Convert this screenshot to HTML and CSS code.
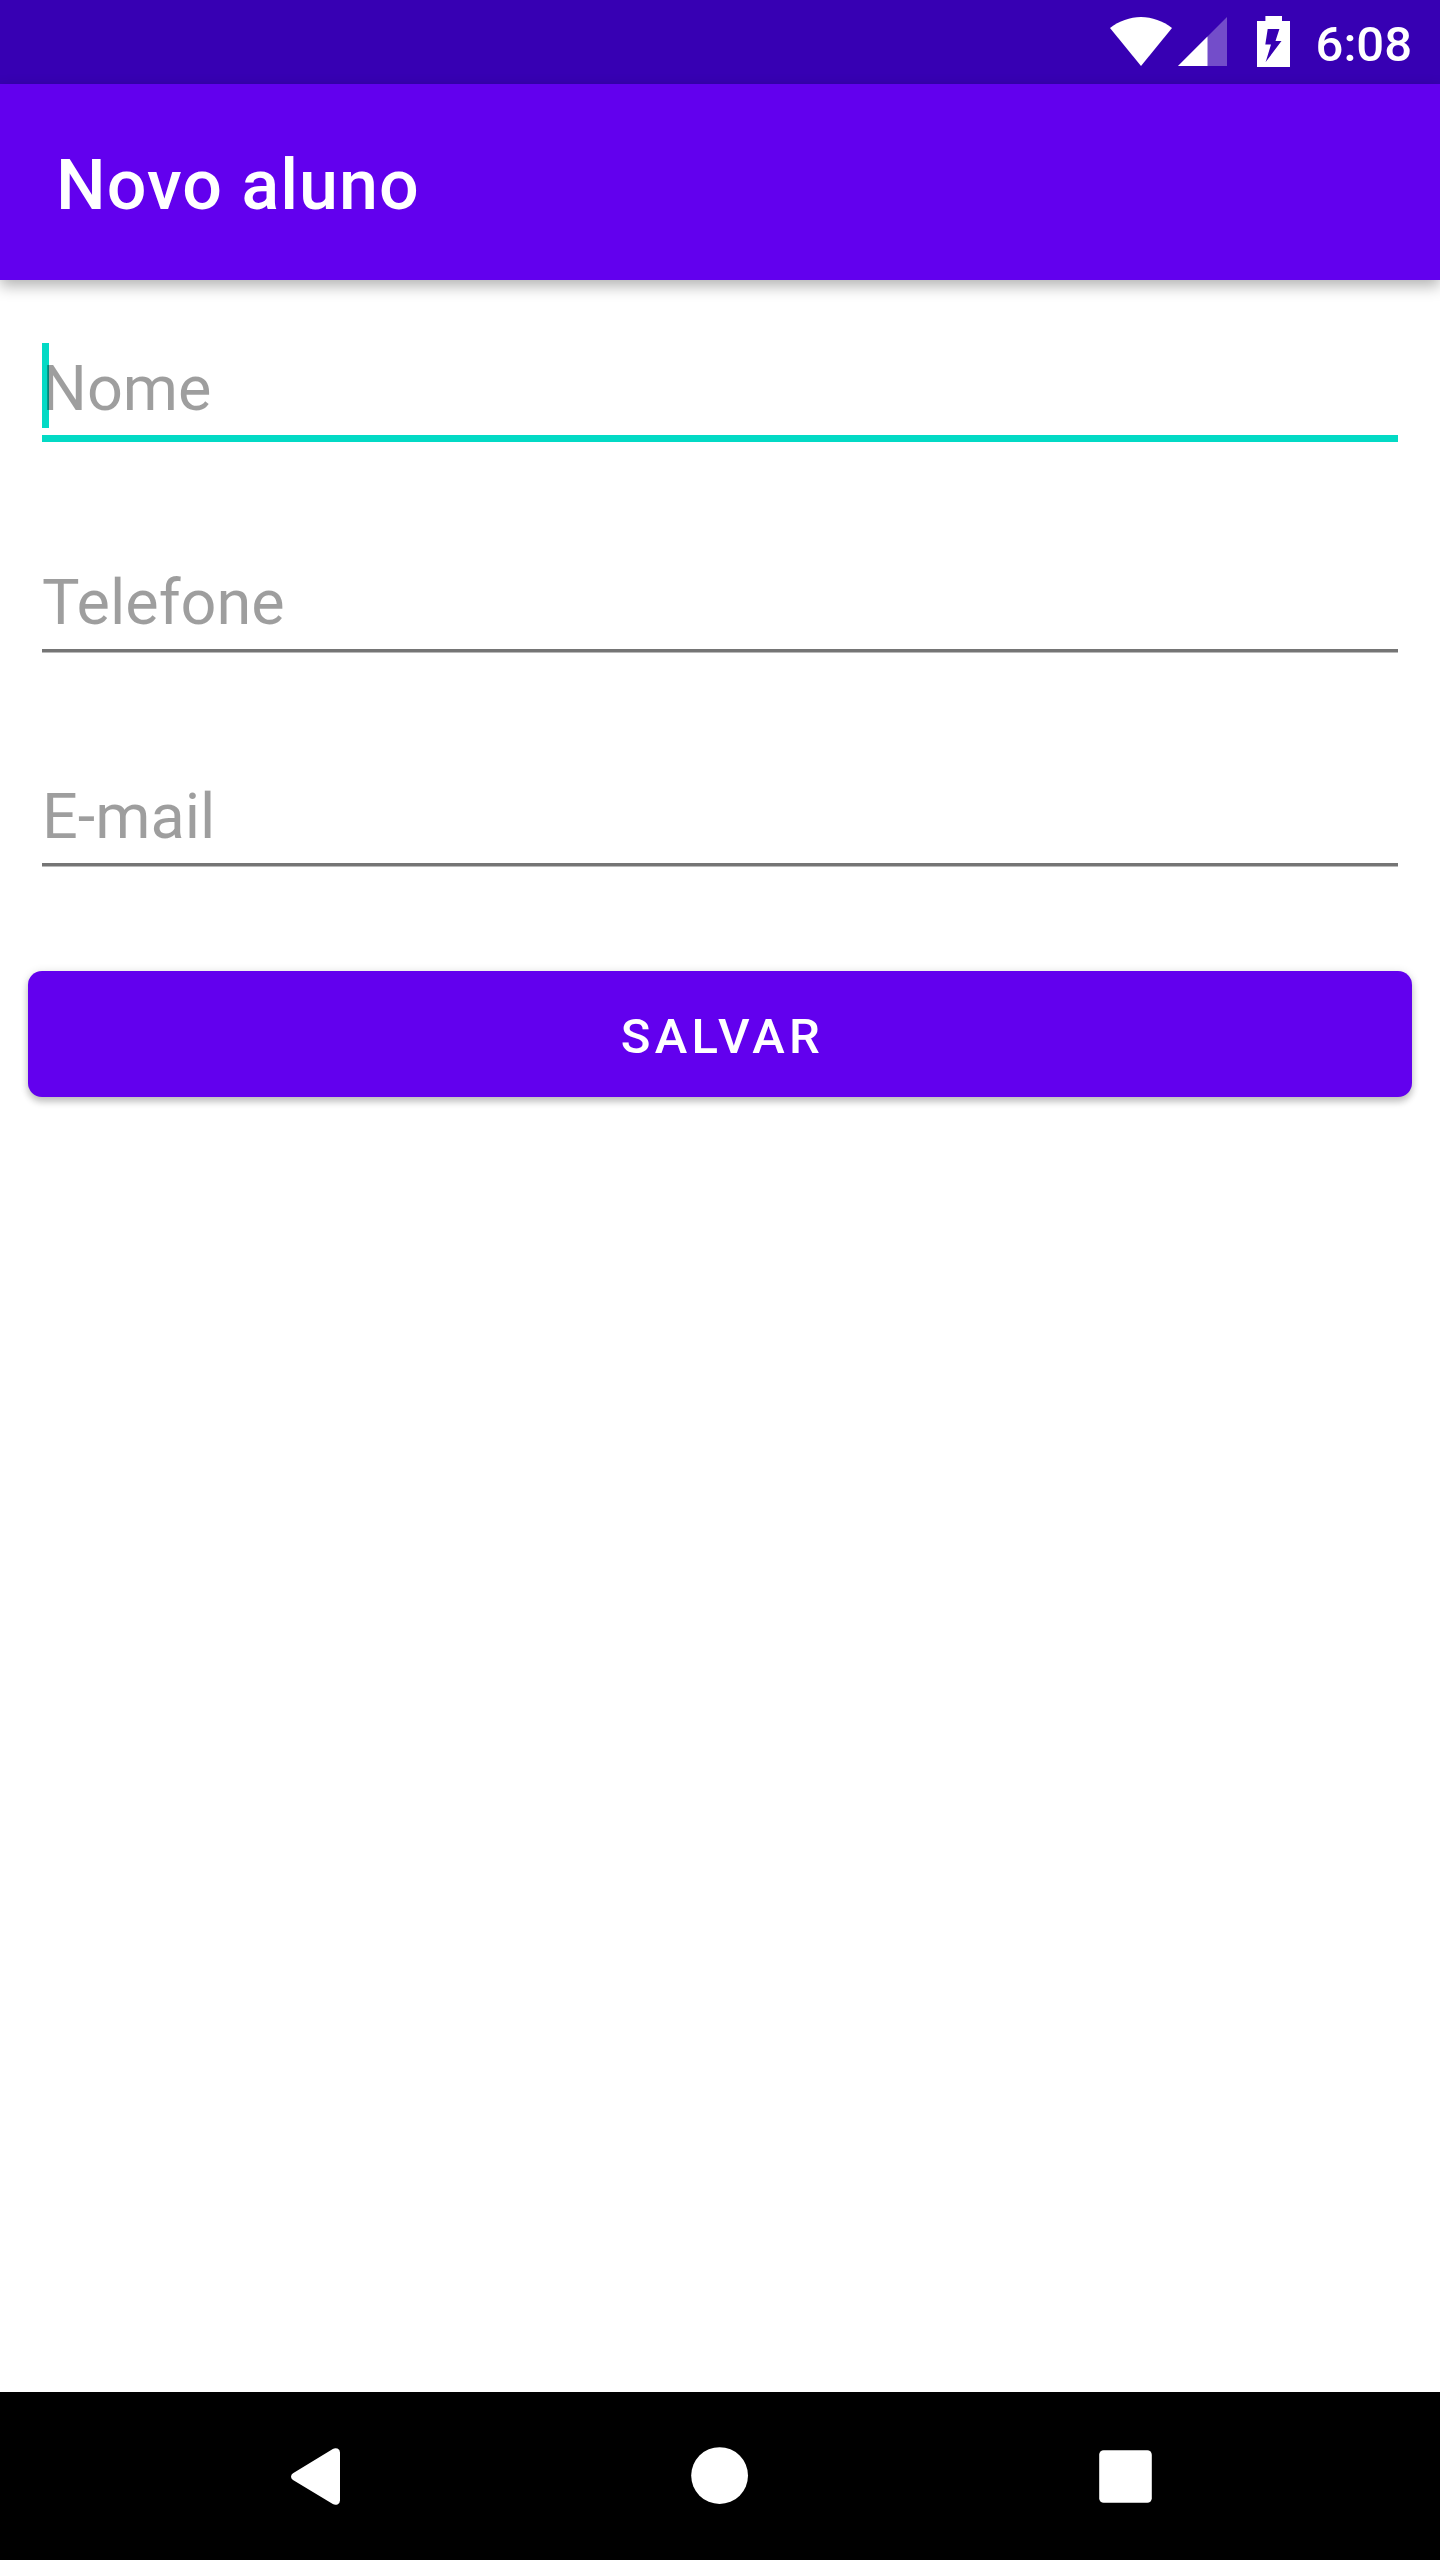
FILE: index.html
```html
<!DOCTYPE html>
<html lang="pt-BR">
<head>
<meta charset="utf-8">
<title>Novo aluno</title>
<link rel="stylesheet" href="styles.css">
</head>
<body>
<div class="screen">
  <div class="status-bar">
    <svg class="wifi" width="62" height="84" viewBox="0 0 62 84"><path fill="#fff" d="M0 28C9 21 20 17 31 17S53 21 62 28L31 66Z"/></svg>
    <svg class="signal" width="49" height="84" viewBox="0 0 49 84"><path fill="#fff" fill-opacity=".3" d="M49 17V66H0Z"/><path fill="#fff" d="M29.5 36.5V66H0Z"/></svg>
    <svg class="battery" width="33" height="84" viewBox="0 0 33 84"><path fill="#fff" fill-rule="evenodd" d="M8.4 16H25V21H33V67H0V21H8.4ZM10.7 29L8.3 44.5H14L8.7 62L24.5 41H18.5L22.4 29Z"/></svg>
    <span class="clock">6:08</span>
  </div>
  <header class="app-bar"><h1 class="title">Novo aluno</h1></header>
  <form class="form">
    <div class="field field-focused"><span class="cursor"></span><input class="input" type="text" placeholder="Nome"></div>
    <div class="field"><input class="input" type="text" placeholder="Telefone"></div>
    <div class="field"><input class="input" type="text" placeholder="E-mail"></div>
    <button class="save" type="button">SALVAR</button>
  </form>
  <nav class="nav-bar">
    <svg width="84" height="84" viewBox="0 0 84 84"><path fill="#fff" d="M20 39.3L59.8 15Q62 13.6 64.5 14.6Q67 15.8 67 18.5V66.5Q67 69.2 64.5 70.4Q62 71.4 59.8 70L20 46.1Q18 44.6 18 42.7Q18 40.8 20 39.3Z"/></svg>
    <svg width="84" height="84" viewBox="0 0 84 84"><circle cx="41.6" cy="41.6" r="28.4" fill="#fff"/></svg>
    <svg width="84" height="84" viewBox="0 0 84 84"><rect x="16.2" y="16.2" width="52.6" height="52.6" rx="4.5" fill="#fff"/></svg>
  </nav>
</div>
</body>
</html>
```
FILE: styles.css
```css
* { box-sizing: border-box; }

body {
  margin: 0;
  font-family: Roboto, "Noto Sans", sans-serif;
}

.screen {
  display: flex;
  flex-direction: column;
  width: 1440px;
  height: 2560px;
  background: #fff;
  overflow: hidden;
}

.status-bar {
  display: flex;
  justify-content: flex-end;
  height: 84px;
  padding-right: 28px;
  background: #3700b3;
}

.status-bar svg { display: block; }
.signal { margin-left: 6px; }
.battery { margin-left: 30px; }

.clock {
  margin-left: 26px;
  padding-top: 4px;
  color: #fff;
  font-size: 49px;
  font-weight: 500;
  line-height: 81px;
}

.app-bar {
  position: relative;
  height: 196px;
  padding: 6px 56px 0;
  background: #6200ee;
  box-shadow: 0 6px 14px rgba(0, 0, 0, .3);
}

.title {
  margin: 0;
  color: #fff;
  font-size: 70px;
  font-weight: 500;
  line-height: 190px;
  letter-spacing: .015em;
}

.form {
  display: flex;
  flex: 1;
  flex-direction: column;
  padding: 63px 28px 0;
}

.field {
  position: relative;
  height: 96px;
  margin: 0 14px 118px;
  border-bottom: 1px solid #bababa;
}

.field::after {
  display: block;
  height: 3px;
  margin-top: 1px;
  background: #757575;
  content: "";
}

.field-focused { border-bottom: 0; }

.field-focused::after {
  height: 7px;
  background: #03dac5;
}

.cursor {
  position: absolute;
  top: 0;
  left: 0;
  width: 7px;
  height: 85px;
  background: #03dac5;
}

.input {
  position: relative;
  display: block;
  width: 100%;
  height: 91px;
  padding: 0;
  border: 0;
  outline: 0;
  background: transparent;
  font: 400 63px Roboto, "Noto Sans", sans-serif;
}

.input::placeholder { color: rgba(0, 0, 0, .38); opacity: 1; }

.save {
  height: 126px;
  margin: -14px 0 0;
  padding: 4px 0 0 5px;
  border: 0;
  border-radius: 14px;
  background: #6200ee;
  box-shadow: 0 5px 7px rgba(0, 0, 0, .2), 0 1px 10px rgba(0, 0, 0, .12);
  color: #fff;
  font: 500 49px Roboto, "Noto Sans", sans-serif;
  letter-spacing: .0892857em;
}

.nav-bar {
  display: grid;
  grid-template-columns: repeat(3, 405px);
  place-content: center;
  place-items: center;
  height: 168px;
  background: #000;
}
```
